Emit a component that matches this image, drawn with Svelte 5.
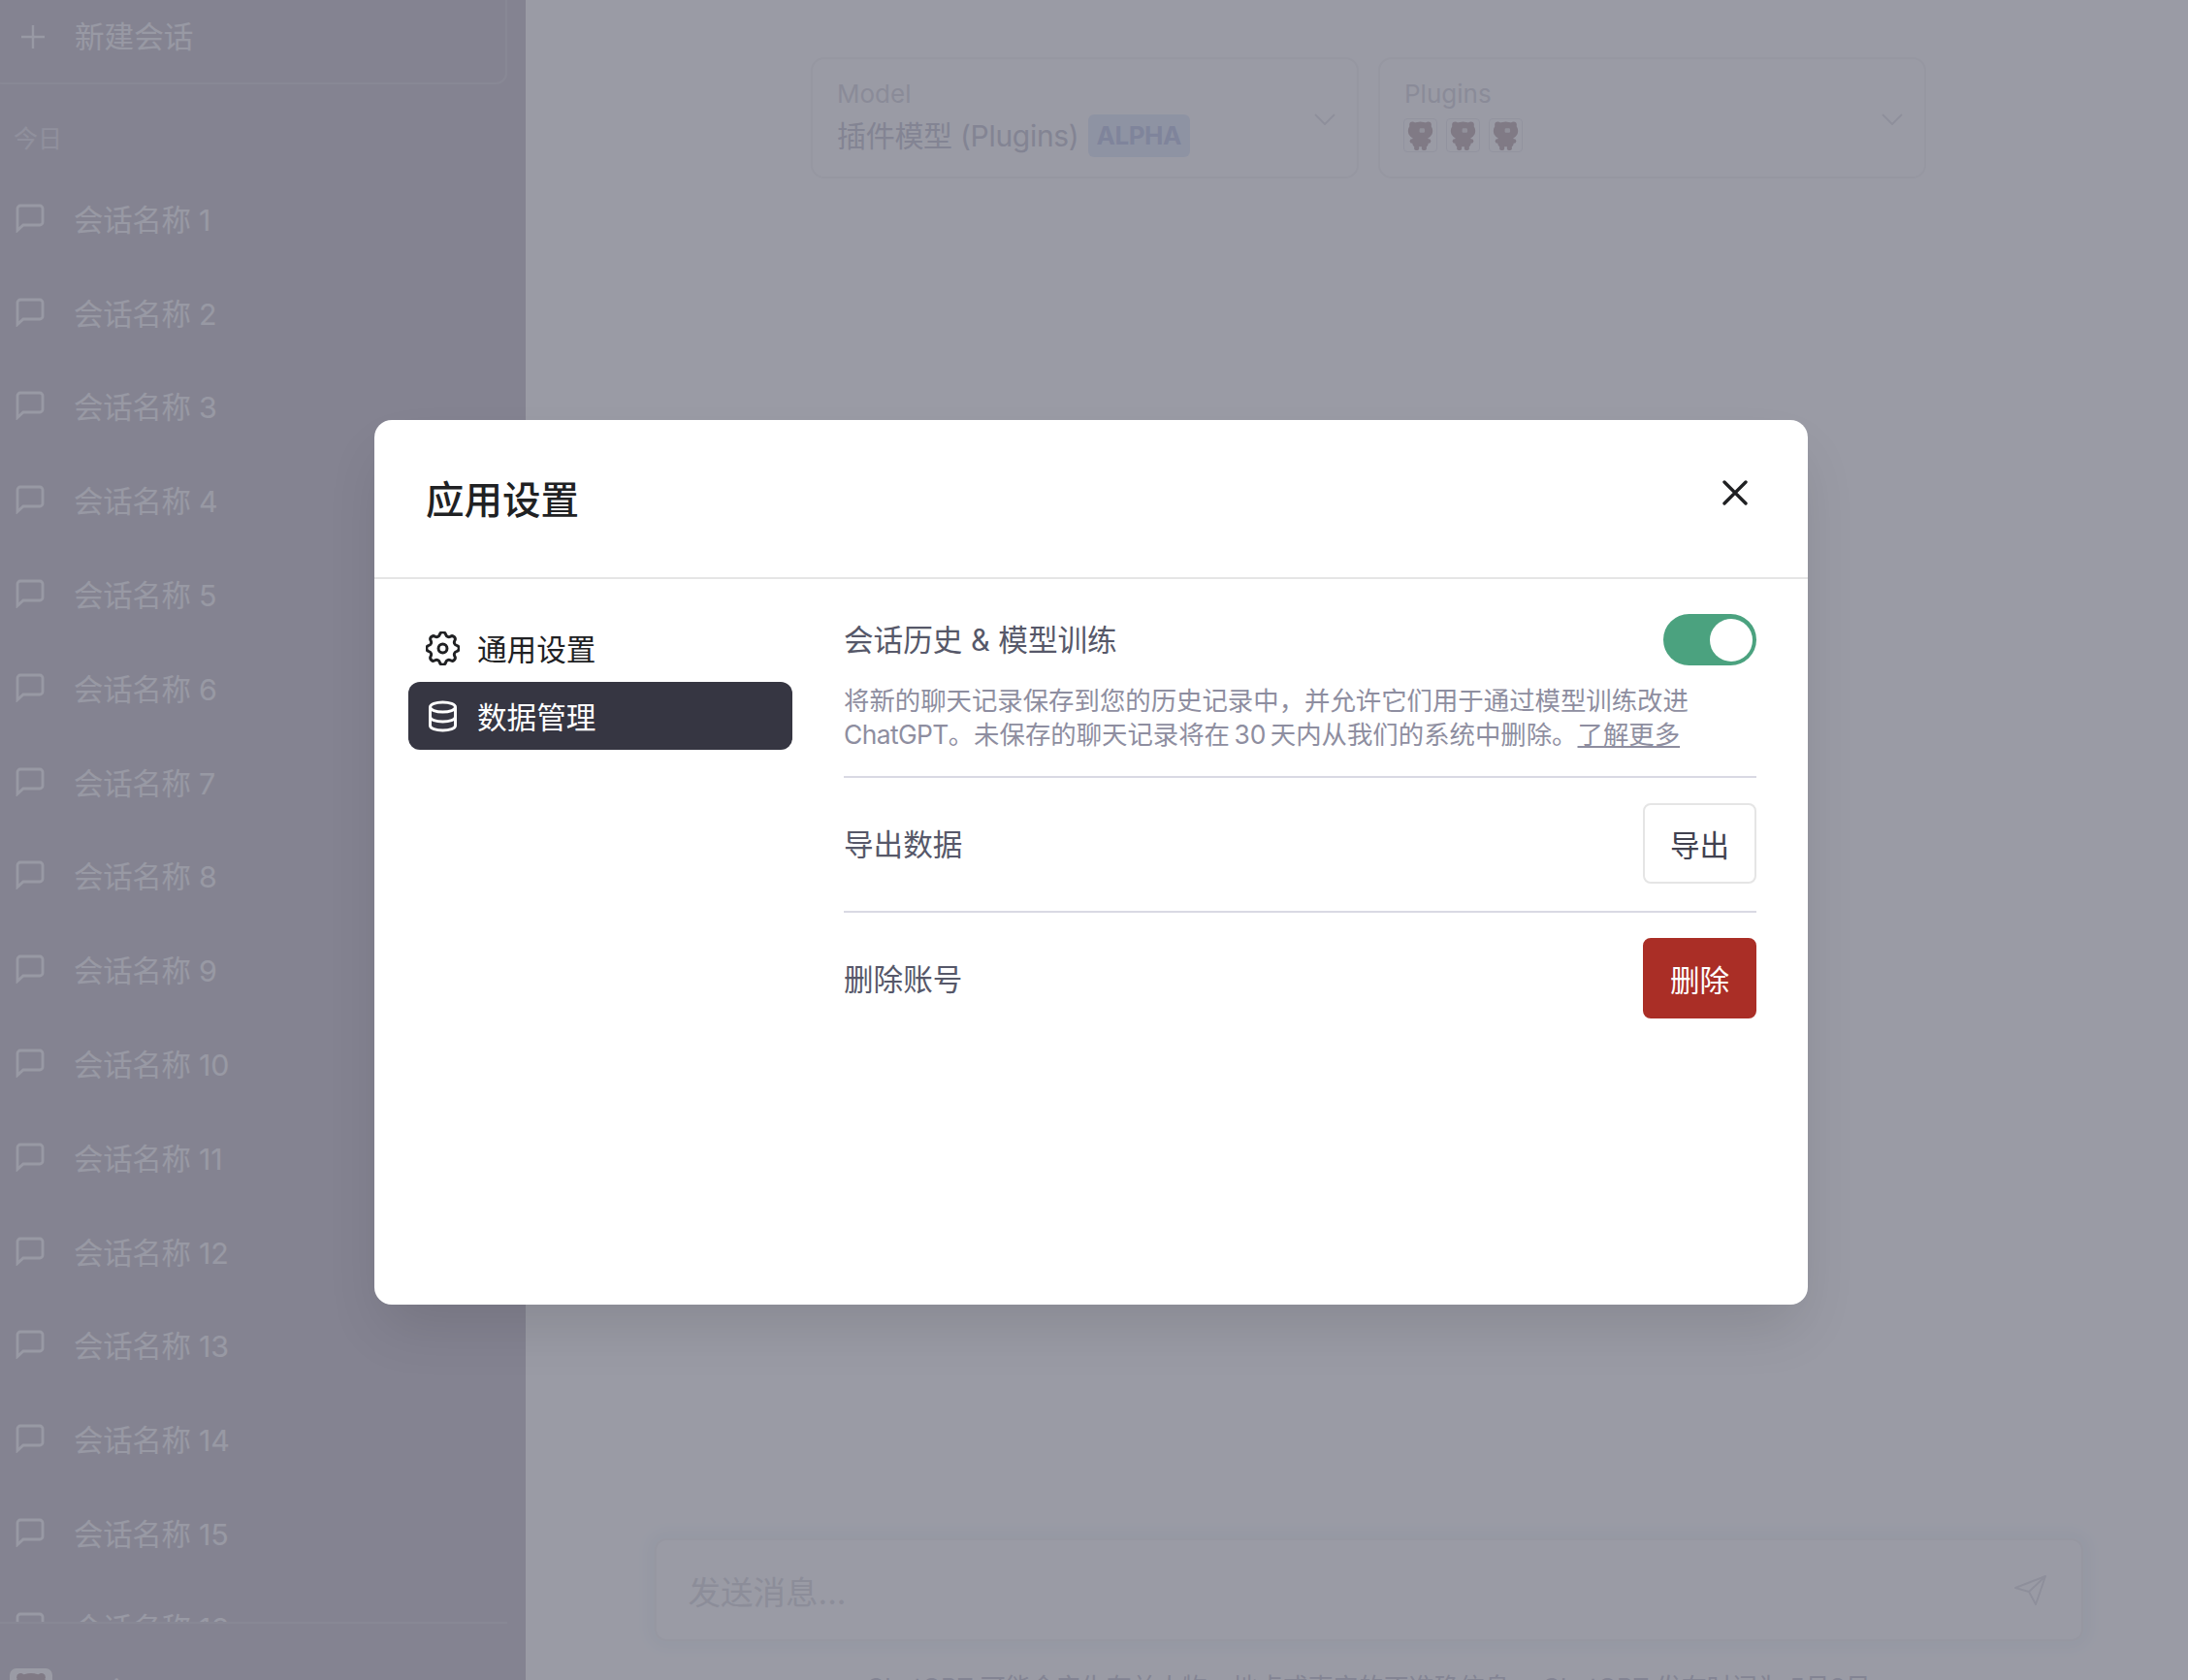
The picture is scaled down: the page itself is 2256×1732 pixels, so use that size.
<script lang="ts">
  const chats = Array.from({ length: 16 }, (_, i) => `会话名称 ${i + 1}`);
  const plugins = [0, 1, 2];

  let historyOn = $state(true);
</script>

{#snippet bear()}
  <svg class="bear" viewBox="0 0 32 35">
    <circle cx="7" cy="5" r="3.5" />
    <circle cx="25" cy="5" r="3.5" />
    <ellipse cx="16" cy="12" rx="14" ry="10.5" />
    <rect x="7" y="18" width="18" height="12" rx="4" />
    <rect x="4" y="21" width="24" height="5" rx="2.5" />
    <rect x="9" y="27" width="5.5" height="7" rx="2" />
    <rect x="17.5" y="27" width="5.5" height="7" rx="2" />
    <rect class="snout" x="15" y="9" width="6" height="5" rx="1.5" />
  </svg>
{/snippet}

<div class="page">
  <aside class="sidebar">
    <button class="new-chat">
      <svg viewBox="0 0 24 24" width="24" height="24" fill="none" stroke="currentColor" stroke-width="2.4">
        <path d="M12 0v24M0 12h24" />
      </svg>
      <span>新建会话</span>
    </button>
    <div class="day">今日</div>
    <ul class="chats">
      {#each chats as chat}
        <li>
          <svg viewBox="0 0 30 30" width="30" height="30" fill="none" stroke="currentColor" stroke-width="2.8">
            <path d="M2 27.5V5a3 3 0 0 1 3-3h20a3 3 0 0 1 3 3v14a3 3 0 0 1-3 3H8z" />
          </svg>
          <span>{chat}</span>
        </li>
      {/each}
    </ul>
    <div class="account">
      <div class="avatar">{@render bear()}</div>
      <span>wei</span>
    </div>
  </aside>

  <main class="main">
    <div class="selectors">
      <div class="select">
        <div>
          <div class="select-label">Model</div>
          <div class="select-value"><span class="value-text">插件模型 (Plugins)</span><span class="badge">ALPHA</span></div>
        </div>
        <svg class="chevron" viewBox="0 0 22 12" width="22" height="12" fill="none" stroke="currentColor" stroke-width="2">
          <path d="M1 1l10 10L21 1" />
        </svg>
      </div>
      <div class="select">
        <div>
          <div class="select-label">Plugins</div>
          <div class="plugin-icons">
            {#each plugins as p (p)}
              <div class="plugin-tile">{@render bear()}</div>
            {/each}
          </div>
        </div>
        <svg class="chevron" viewBox="0 0 22 12" width="22" height="12" fill="none" stroke="currentColor" stroke-width="2">
          <path d="M1 1l10 10L21 1" />
        </svg>
      </div>
    </div>

    <div class="composer">
      <div class="input">
        <span>发送消息...</span>
        <svg viewBox="0 0 33 31" width="33" height="31" fill="none" stroke="currentColor" stroke-width="2" stroke-linejoin="round">
          <path d="M32 1L1 13l14 4 7 13zM32 1L15 17" />
        </svg>
      </div>
      <p class="disclaimer">ChatGPT 可能会产生有关人物、地点或事实的不准确信息。 ChatGPT 发布时间为 5月3日</p>
    </div>
  </main>

  <div class="overlay"></div>

  <div class="modal">
    <header class="modal-head">
      <h2>应用设置</h2>
      <button class="close" aria-label="关闭">
        <svg viewBox="0 0 26 26" width="26" height="26" fill="none" stroke="currentColor" stroke-width="3.4" stroke-linecap="round">
          <path d="M2 2l22 22M24 2L2 24" />
        </svg>
      </button>
    </header>

    <div class="modal-body">
      <nav class="tabs">
        <button class="tab">
          <svg viewBox="2.6 2.6 18.8 18.8" width="35" height="35" fill="none" stroke="currentColor" stroke-width="1.6" stroke-linejoin="round">
            <path d="M10.325 4.317c.426 -1.756 2.924 -1.756 3.35 0a1.724 1.724 0 0 0 2.573 1.066c1.543 -.94 3.31 .826 2.37 2.37a1.724 1.724 0 0 0 1.065 2.572c1.756 .426 1.756 2.924 0 3.35a1.724 1.724 0 0 0 -1.066 2.573c.94 1.543 -.826 3.31 -2.37 2.37a1.724 1.724 0 0 0 -2.572 1.065c-.426 1.756 -2.924 1.756 -3.35 0a1.724 1.724 0 0 0 -2.573 -1.066c-1.543 .94 -3.31 -.826 -2.37 -2.37a1.724 1.724 0 0 0 -1.065 -2.572c-1.756 -.426 -1.756 -2.924 0 -3.35a1.724 1.724 0 0 0 1.066 -2.573c-.94 -1.543 .826 -3.31 2.37 -2.37c1 .608 2.296 .07 2.572 -1.065z" />
            <circle cx="12" cy="12" r="2.4" />
          </svg>
          <span>通用设置</span>
        </button>
        <button class="tab active">
          <svg viewBox="0 0 30 33" width="30" height="33" fill="none" stroke="currentColor" stroke-width="3">
            <ellipse cx="15" cy="7" rx="13" ry="5" />
            <path d="M2 7v19c0 3 6 5 13 5s13-2 13-5V7" />
            <path d="M2 17c0 3 6 5 13 5s13-2 13-5" />
          </svg>
          <span>数据管理</span>
        </button>
      </nav>

      <section class="panel">
        <div class="history">
          <div class="row-head">
            <span class="row-title">会话历史 &amp; 模型训练</span>
            <button class="toggle" class:on={historyOn} aria-label="会话历史" onclick={() => (historyOn = !historyOn)}>
              <span class="knob"></span>
            </button>
          </div>
          <p class="desc">
            将新的聊天记录保存到您的历史记录中，并允许它们用于通过模型训练改进<br />
            <span class="tight">ChatGPT</span>。未保存的聊天记录将在 30 天内从我们的系统中删除。<a href="#more">了解更多</a>
          </p>
        </div>
        <div class="row">
          <span class="row-title">导出数据</span>
          <button class="btn">导出</button>
        </div>
        <div class="row">
          <span class="row-title">删除账号</span>
          <button class="btn danger">删除</button>
        </div>
      </section>
    </div>
  </div>
</div>

<style>
  :global(body) {
    margin: 0;
    background: #fff;
  }

  .page {
    position: relative;
    display: flex;
    height: 1732px;
    overflow: hidden;
    font-family: Inter, "Noto Sans CJK SC", sans-serif;
  }

  button {
    font: inherit;
    border: none;
    background: none;
    padding: 0;
    cursor: pointer;
  }

  .tight {
    letter-spacing: -0.6px;
  }

  /* sidebar, sits under the overlay */
  .sidebar {
    width: 542px;
    flex: none;
    display: flex;
    flex-direction: column;
    box-sizing: border-box;
    padding-right: 19px;
    background: #c9c4cd;
    color: #fafafc;
  }

  .new-chat {
    display: flex;
    align-items: center;
    gap: 31px;
    height: 98px;
    margin: -11px 0 0 -10px;
    padding-left: 30px;
    border: 2px solid #d3cfd7;
    border-radius: 12px;
    color: #fafafc;
    font-size: 30.6px;
    line-height: 40px;
  }

  .day {
    margin: 38px 0 0 14px;
    font-size: 25px;
    line-height: 36px;
    color: #e6e4ea;
  }

  .chats {
    flex: 1;
    min-height: 0;
    overflow: hidden;
    list-style: none;
    margin: 15.5px 0 0;
    padding: 0;
  }

  .chats li {
    display: flex;
    align-items: center;
    gap: 30px;
    height: 96.8px;
    padding-left: 16px;
    font-size: 30.4px;
    letter-spacing: -0.2px;
  }

  .account {
    height: 57px;
    flex: none;
    padding-top: 46px;
    margin-bottom: -45px;
    display: flex;
    align-items: flex-start;
    gap: 24px;
    padding-left: 10px;
    border-top: 2px solid #d3cfd7;
    font-size: 28px;
    line-height: 44px;
  }

  .avatar {
    width: 44px;
    height: 44px;
    flex: none;
    border-radius: 7px;
    background: #fff;
    overflow: hidden;
    display: flex;
    justify-content: center;
  }

  .avatar .bear {
    width: 38px;
    height: 42px;
    margin-top: 3px;
  }

  .bear {
    width: 29px;
    height: 32px;
    fill: #bfacb0;
  }

  .bear .snout {
    fill: #e8e4e4;
  }

  /* main column */
  .main {
    flex: 1;
    display: flex;
    flex-direction: column;
    justify-content: space-between;
    align-items: center;
    padding-left: 24px;
    color: #c5c5d2;
  }

  .selectors {
    display: flex;
    gap: 20px;
    margin-top: 59px;
  }

  .select {
    width: 565px;
    height: 125px;
    box-sizing: border-box;
    display: flex;
    justify-content: space-between;
    align-items: flex-start;
    padding: 19px 22px 0 25px;
    border: 2px solid #f4f4f6;
    border-radius: 14px;
  }

  .chevron {
    align-self: center;
    margin-top: -17px;
    color: #e2e2e7;
  }

  .select-label {
    font-size: 26px;
    line-height: 34px;
    color: #d8d8df;
  }

  .select-value {
    margin-top: 3.5px;
    display: flex;
    align-items: center;
    gap: 9px;
    font-size: 30px;
    line-height: 44px;
    color: #c5c5d2;
  }

  .value-text {
    letter-spacing: -0.3px;
  }

  .badge {
    padding: 0 9px;
    border-radius: 6px;
    background: #e2ecfb;
    color: #bcc6e6;
    font-size: 26px;
    font-weight: 700;
    letter-spacing: -0.5px;
  }

  .plugin-icons {
    display: flex;
    gap: 9px;
    margin: 8px 0 0 -1px;
  }

  .plugin-tile {
    width: 35px;
    height: 35px;
    box-sizing: border-box;
    border: 1px solid #ebebf0;
    border-radius: 4px;
    display: flex;
    align-items: center;
    justify-content: center;
  }

  .composer {
    display: flex;
    flex-direction: column;
    align-items: center;
    margin-bottom: -23px;
  }

  .input {
    width: 1473px;
    height: 106px;
    box-sizing: border-box;
    display: flex;
    justify-content: space-between;
    align-items: center;
    padding: 0 36px 0 33px;
    border: 2px solid #f4f4f6;
    border-radius: 12px;
    box-shadow: 0 0 16px 8px #f2f8fb;
    font-size: 33.5px;
    color: #dcdce1;
  }

  .input svg {
    color: #e2e2e7;
  }

  .disclaimer {
    margin: 33px 0 0;
    font-size: 26px;
    line-height: 30px;
    color: #c5c5d2;
    white-space: nowrap;
  }

  .overlay {
    position: absolute;
    inset: 0;
    background: rgba(86, 88, 105, 0.6);
  }

  /* settings dialog */
  .modal {
    position: absolute;
    left: 386px;
    top: 433px;
    width: 1478px;
    height: 912px;
    border-radius: 18px;
    background: #fff;
    box-shadow: 0 30px 60px -10px rgba(0, 0, 0, 0.12);
    overflow: hidden;
  }

  .modal-head {
    height: 164px;
    box-sizing: border-box;
    display: flex;
    justify-content: space-between;
    align-items: center;
    padding: 0 62px 0 53px;
    border-bottom: 2px solid #e5e5e5;
  }

  h2 {
    margin: 3px 0 0;
    font-size: 39.5px;
    font-weight: 500;
    line-height: 52px;
    color: #202123;
  }

  .close {
    display: flex;
    margin-bottom: 12px;
    color: #202123;
  }

  .modal-body {
    display: flex;
    gap: 53px;
    padding: 36px 53px 0 35px;
  }

  .tabs {
    width: 396px;
    flex: none;
    display: flex;
    flex-direction: column;
  }

  .tab {
    height: 70px;
    display: flex;
    align-items: center;
    gap: 18px;
    padding-left: 18px;
    border-radius: 12px;
    font-size: 30.6px;
    color: #202123;
  }

  .tab svg {
    width: 35px;
    flex: none;
  }

  .tab.active {
    background: #363642;
    color: #fff;
  }

  .panel {
    flex: 1;
    display: flex;
    flex-direction: column;
    color: #565869;
  }

  .history {
    padding-bottom: 25px;
  }

  .row-head,
  .row {
    display: flex;
    justify-content: space-between;
    align-items: center;
  }

  .row-title {
    font-size: 30.6px;
    line-height: 40px;
  }

  .row .row-title {
    margin-top: 3px;
  }

  .toggle {
    width: 96px;
    height: 53px;
    display: flex;
    align-items: center;
    justify-content: flex-start;
    padding: 0 4px;
    box-sizing: border-box;
    border-radius: 27px;
    background: #d9d9e3;
  }

  .toggle.on {
    justify-content: flex-end;
    background: #4ba27f;
  }

  .knob {
    width: 44px;
    height: 44px;
    border-radius: 50%;
    background: #fff;
  }

  .desc {
    margin: 19px 0 0;
    font-size: 26.4px;
    line-height: 35px;
    word-spacing: -3px;
    color: #8e8ea0;
  }

  .desc a {
    color: inherit;
  }

  .row {
    padding: 26px 0 28px;
    border-top: 2px solid #d9d9e3;
  }

  .btn {
    width: 117px;
    height: 83px;
    border: 2px solid #e5e5e5;
    border-radius: 8px;
    background: #fff;
    color: #40414f;
    font-size: 30.6px;
  }

  .btn.danger {
    border-color: #aa2e26;
    background: #aa2e26;
    color: #fff;
  }
</style>
